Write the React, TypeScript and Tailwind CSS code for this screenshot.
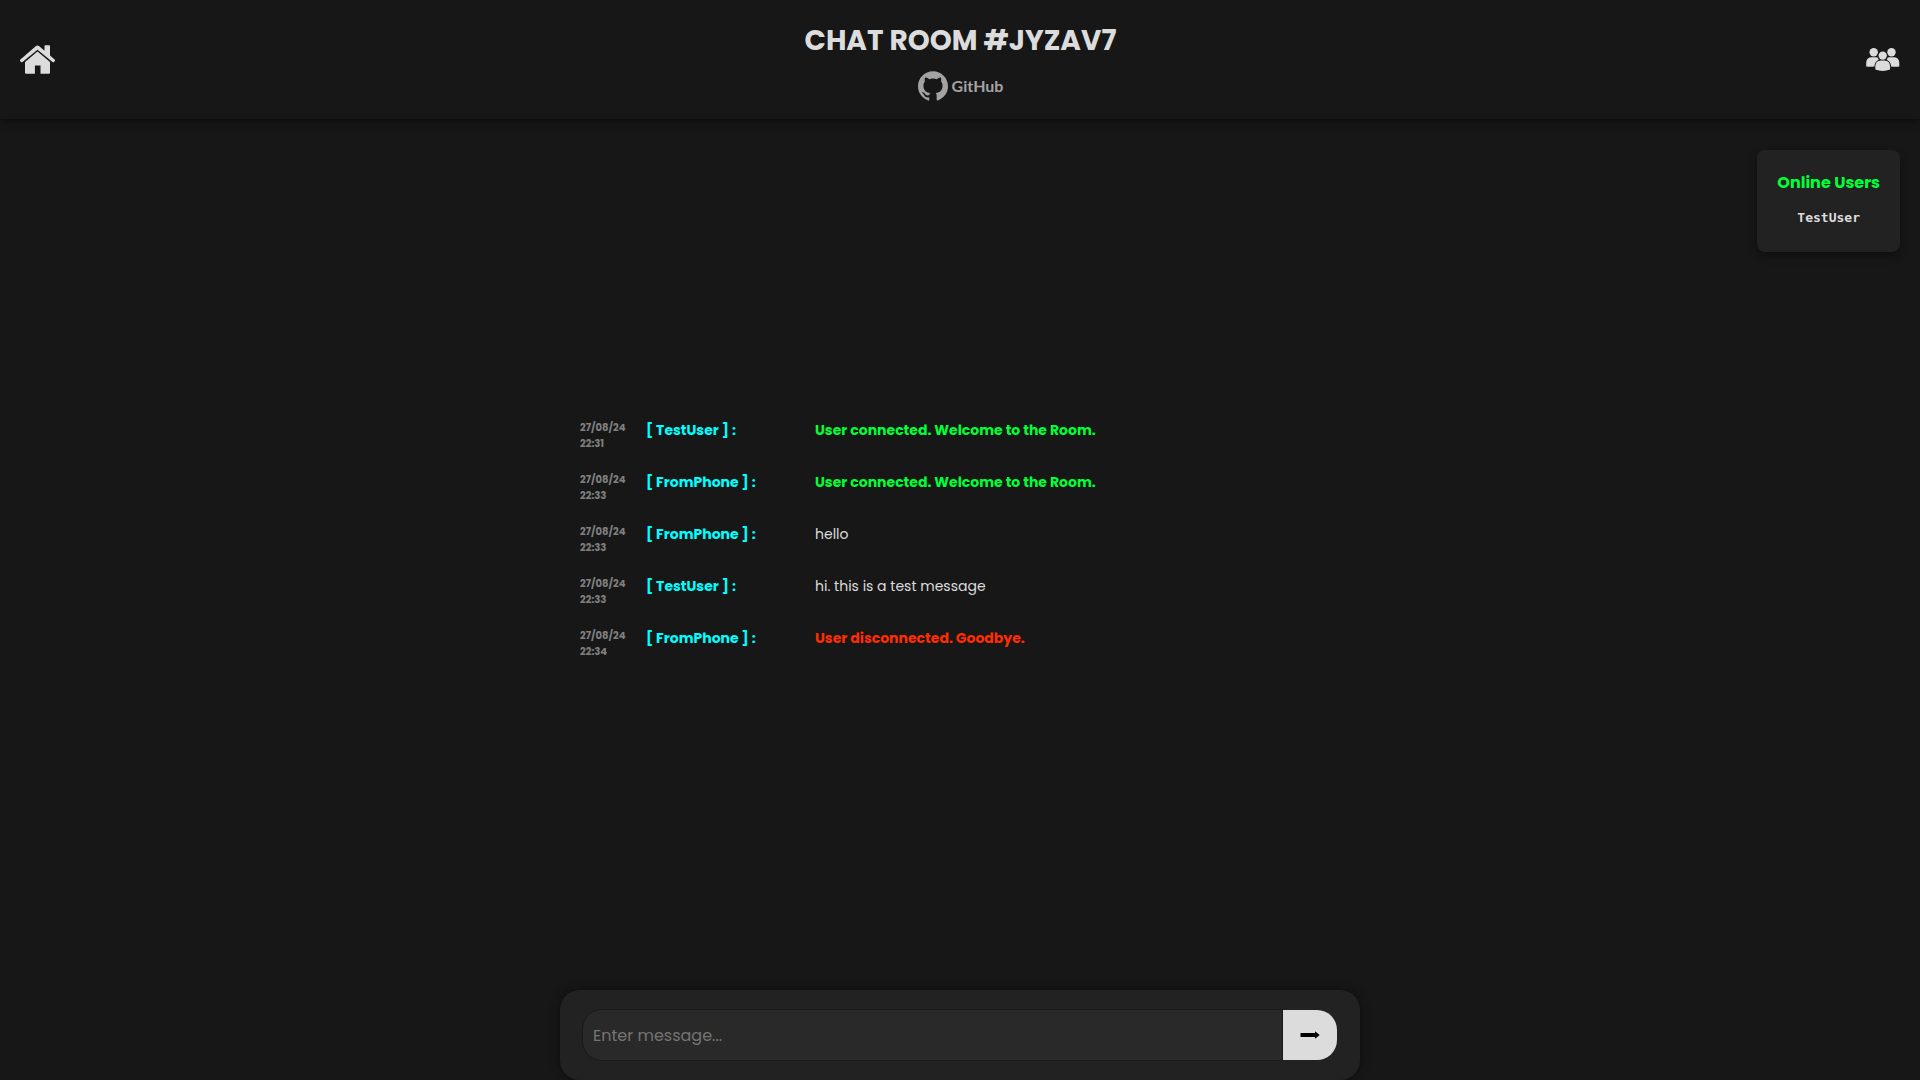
import { SiGithub } from "react-icons/si";

type Kind = "join" | "leave" | "chat";

const messages: { date: string; time: string; user: string; text: string; kind: Kind }[] = [
  { date: "27/08/24", time: "22:31", user: "TestUser", text: "User connected. Welcome to the Room.", kind: "join" },
  { date: "27/08/24", time: "22:33", user: "FromPhone", text: "User connected. Welcome to the Room.", kind: "join" },
  { date: "27/08/24", time: "22:33", user: "FromPhone", text: "hello", kind: "chat" },
  { date: "27/08/24", time: "22:33", user: "TestUser", text: "hi. this is a test message", kind: "chat" },
  { date: "27/08/24", time: "22:34", user: "FromPhone", text: "User disconnected. Goodbye.", kind: "leave" },
];

const kindClass: Record<Kind, string> = {
  join: "font-bold text-[#00ff37]",
  leave: "font-bold text-[#ff2d00]",
  chat: "text-[#dcdcdc]",
};

function HomeIcon() {
  return (
    <svg viewBox="0 0 35 30" className="h-[30px] w-[35px]" fill="currentColor" aria-hidden="true">
      <path d="M17.500.5q.8 0 1.500.6L24.500 5.800V1q0-.7.7-.7h4.100q.7 0 .7.7v9.600l4.600 4q.8.700.2 1.400l-.8.900q-.7.700-1.500 0L17.500 4.700 2.500 16.900q-.8.700-1.500 0l-.8-.900q-.6-.700.2-1.400L16 1.100q.7-.6 1.500-.6z" />
      <path d="M17.500 6.600 30 16.900v10.800q0 1.100-1.100 1.100h-8.400v-8.300h-5.600v8.300H6.100Q5 28.800 5 27.700V16.900z" />
    </svg>
  );
}

function UsersIcon() {
  return (
    <svg viewBox="0 0 34 24" className="h-6 w-[34px]" fill="currentColor" aria-hidden="true">
      <circle cx="7.700" cy="4.300" r="4.200" />
      <circle cx="25.500" cy="4.300" r="4.200" />
      <path d="M.2 18.400V15Q.2 9.200 6 9.200h3.500q1.300 0 2.300.4.300 1.500 1 2.100Q9.200 13.200 8.500 17.300v1.100Q4 19.200.2 18.400z" />
      <path d="M33.300 18.400V15q0-5.800-5.800-5.800H24q-1.300 0-2.300.4-.3 1.500-1 2.100 3.600 1.500 4.300 5.600v1.100q4.500.8 8.300 0z" />
      <circle cx="16.700" cy="7.600" r="4.200" />
      <path d="M9.300 21.600V18.500Q9.500 12.500 15 12.500h3.400q5.500 0 5.700 6v3.100Q16.700 24.200 9.300 21.600z" />
    </svg>
  );
}

function ArrowIcon() {
  return (
    <svg viewBox="0 0 20 8" className="h-2 w-5" fill="#000" aria-hidden="true">
      <path d="M.5 2h14.500V.2L19.700 4 15 7.800V6H.5z" />
    </svg>
  );
}

export default function App() {
  return (
    <div className="flex min-h-screen flex-col bg-[#171717] font-['Poppins','Inter',sans-serif] text-[#dcdcdc]">
      <header className="relative flex h-[119px] items-center justify-between px-5 shadow-[0_0_10px_rgba(0,0,0,0.8)]">
        <a href="#home" aria-label="Home">
          <HomeIcon />
        </a>
        <div className="flex flex-col items-center gap-3 pt-[5px]">
          <h1 className="text-[28px] leading-9 font-bold text-[#dcdcdc]">CHAT ROOM #JYZAV7</h1>
          <a
            href="#github"
            className="flex items-center gap-1 font-['Lato',sans-serif] text-base leading-[30px] font-bold text-[#a3a3a3]"
          >
            <SiGithub className="size-[30px]" aria-hidden="true" />
            GitHub
          </a>
        </div>
        <button type="button" aria-label="Online users">
          <UsersIcon />
        </button>
        <aside className="absolute top-[150px] right-5 flex flex-col items-center rounded-lg bg-[#222222] p-5 shadow-[0_4px_8px_rgba(0,0,0,0.4)]">
          <h2 className="text-base leading-[26px] font-bold text-[#00ff37]">Online Users</h2>
          <ul className="mt-3 mb-1 font-['DejaVu_Sans_Mono',monospace] text-[13px] leading-5 font-bold">
            <li>TestUser</li>
          </ul>
        </aside>
      </header>

      <main className="flex grow flex-col items-center justify-center pb-[30px]">
        <ul className="flex w-full max-w-[800px] flex-col gap-5 px-5">
          {messages.map((m, i) => (
            <li key={i} className="grid grid-cols-[66px_169px_1fr]">
              <time className="flex flex-col text-[10px] leading-4 font-bold text-[#808080]">
                <span>{m.date}</span>
                <span>{m.time}</span>
              </time>
              <span className="text-sm leading-5 font-bold text-[#00ffff]">[ {m.user} ] :</span>
              <p className={`text-sm leading-5 ${kindClass[m.kind]}`}>{m.text}</p>
            </li>
          ))}
        </ul>
      </main>

      <form
        onSubmit={(e) => e.preventDefault()}
        className="mx-auto flex w-full max-w-[800px] rounded-[20px] bg-[#222222] py-[19px] pr-[23px] pl-[22px] shadow-[0_0_10px_rgba(0,0,0,0.5)]"
      >
        <input
          type="text"
          aria-label="Message"
          placeholder="Enter message..."
          className="h-[52px] min-w-0 grow rounded-l-[20px] border border-[#1a1a1a] bg-[#292929] px-2.5 text-base placeholder:text-[#757575] focus:outline-none"
        />
        <button
          type="submit"
          aria-label="Send"
          className="my-px flex w-[54px] items-center justify-center rounded-r-[20px] bg-[#dcdcdc]"
        >
          <ArrowIcon />
        </button>
      </form>
    </div>
  );
}
